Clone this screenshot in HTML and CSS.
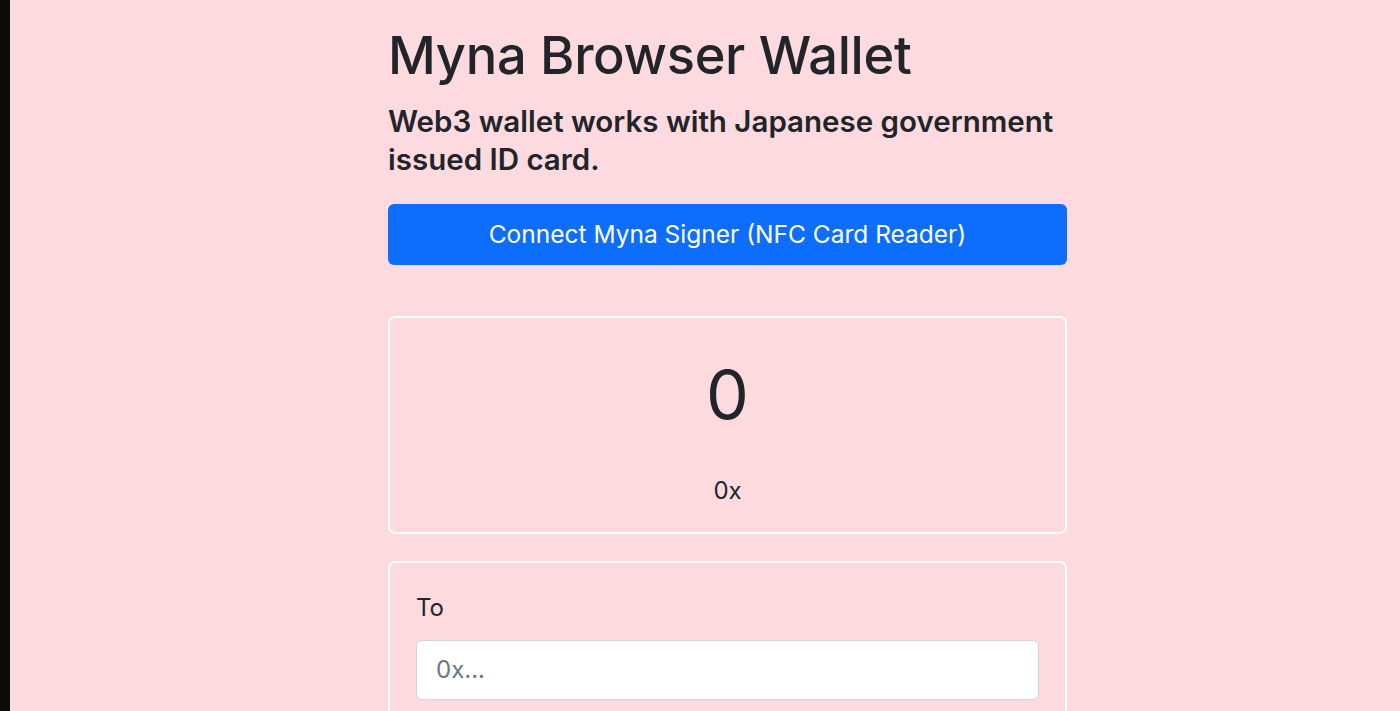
FILE: index.html
```html
<!DOCTYPE html>
<html lang="en">
<head>
    <meta charset="UTF-8">
    <meta name="viewport" content="width=device-width, initial-scale=1.0">
    <title>Myna Browser Wallet</title>
    <link rel="stylesheet" href="styles.css">
</head>
<body>
    <div class="edge"></div>
    <div class="page">
        <div class="wallet">
            <h1>Myna Browser Wallet</h1>
            <p class="lead">Web3 wallet works with Japanese government issued ID card.</p>
            <button class="btn-connect">Connect Myna Signer (NFC Card Reader)</button>

            <div class="card card-balance">
                <div class="balance">0</div>
                <div class="address">0x</div>
            </div>

            <div class="card card-send">
                <label for="to">To</label>
                <input id="to" type="text" placeholder="0x...">
            </div>
        </div>
    </div>
</body>
</html>
```

FILE: styles.css
```css
html, body {
    margin: 0;
    height: 100%;
}

body {
    display: flex;
    font-family: Inter, "Liberation Sans", sans-serif;
    color: #212529;
    background: #fcdadf;
    overflow: hidden;
}

.edge {
    width: 10px;
    flex-shrink: 0;
    background: #0b0b0b;
}

.page {
    flex: 1;
    padding-left: 378px;
}

.wallet {
    width: 679px;
    display: flex;
    flex-direction: column;
}

h1 {
    font-size: 52.4px;
    font-weight: 500;
    line-height: 1.2;
    margin: 24px 0 15px;
    letter-spacing: -0.3px;
}

.lead {
    font-size: 29.5px;
    font-weight: 600;
    line-height: 38px;
    margin: 0 0 26px;
}

.btn-connect {
    height: 61px;
    border: none;
    border-radius: 6px;
    background: #0d6efd;
    color: #fff;
    font-family: inherit;
    font-size: 24.5px;
    margin-bottom: 51px;
}

.card {
    border: 2px solid #fff;
    border-radius: 7px;
    box-sizing: border-box;
}

.card-balance {
    height: 218px;
    display: flex;
    flex-direction: column;
    align-items: center;
    margin-bottom: 27px;
}

.balance {
    font-size: 68px;
    line-height: 1;
    margin-top: 42px;
}

.address {
    font-size: 24px;
    margin-top: 48px;
}

.card-send {
    padding: 30px 26px;
    display: flex;
    flex-direction: column;
    height: 200px;
}

.card-send label {
    font-size: 24px;
    margin-bottom: 18px;
}

.card-send input {
    height: 60px;
    box-sizing: border-box;
    border: 1px solid #ced4da;
    border-radius: 6px;
    padding: 0 19px;
    font-family: inherit;
    font-size: 24px;
    color: #212529;
}

.card-send input::placeholder {
    color: #6c757d;
}
```
